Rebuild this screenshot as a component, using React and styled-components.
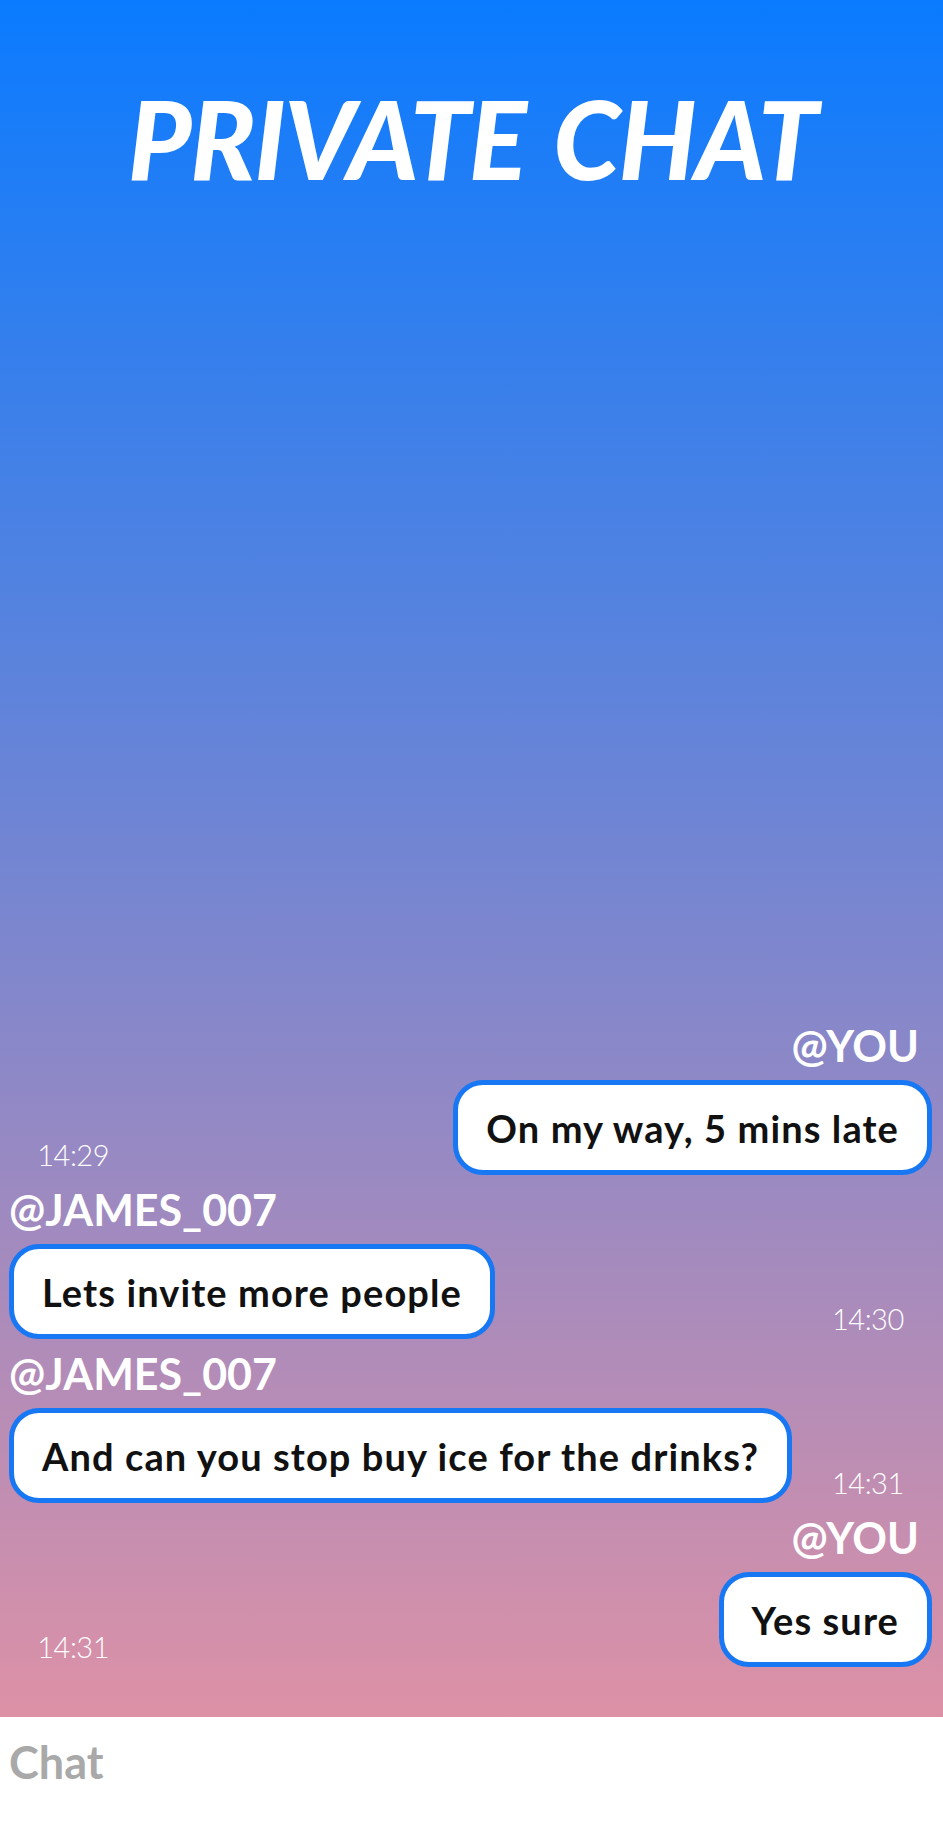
import React from "react";
import styled, { createGlobalStyle } from "styled-components";

const GlobalStyle = createGlobalStyle`
  html, body { margin: 0; padding: 0; }
  body { font-family: Lato, "Noto Sans", sans-serif; background: #fff; }
  * { box-sizing: border-box; }
`;

const Page = styled.div`
  display: flex;
  flex-direction: column;
  min-height: 100vh;
`;

const ChatArea = styled.main`
  flex: 1;
  display: flex;
  flex-direction: column;
  justify-content: space-between;
  background: linear-gradient(180deg, #0a7bff 0%, #8487cb 58%, #dd91a6 100%);
  padding: 84px 11px 50px 9px;
`;

const Title = styled.h1`
  margin: 0;
  text-align: center;
  color: #fff;
  font-family: Lato, sans-serif;
  font-style: italic;
  font-weight: 900;
  font-size: 108px;
  line-height: 1;
  letter-spacing: -1.3px;
  word-spacing: 6px;
  padding-left: 4px;
`;

const Messages = styled.section`
  display: flex;
  flex-direction: column;
  gap: 11px;
`;

const Message = styled.div`
  display: flex;
  flex-direction: column;
  align-items: ${(p) => (p.$mine ? "flex-end" : "flex-start")};
`;

const Name = styled.div`
  color: #fff;
  font-family: Lato, sans-serif;
  font-weight: 700;
  font-size: 43px;
  line-height: 48px;
  margin-bottom: 10px;
  padding-right: ${(p) => (p.$mine ? "13px" : "0")};
`;

const Row = styled.div`
  align-self: stretch;
  display: flex;
  flex-direction: ${(p) => (p.$mine ? "row-reverse" : "row")};
  justify-content: space-between;
  align-items: flex-end;
`;

const Bubble = styled.div`
  height: 95px;
  display: flex;
  align-items: center;
  padding: 0 28px;
  background: #fff;
  border: 5px solid #1877f2;
  border-radius: 30px;
  color: #111;
  font-family: Lato, sans-serif;
  font-weight: 700;
  font-size: 38px;
  letter-spacing: 1.1px;
  white-space: nowrap;
`;

const Time = styled.span`
  width: 100px;
  text-align: ${(p) => (p.$mine ? "right" : "left")};
  color: #fff;
  font-family: Lato, sans-serif;
  font-weight: 300;
  font-size: 29px;
  line-height: 1;
  padding-bottom: 6px;
  letter-spacing: -0.5px;
`;

const InputBar = styled.footer`
  height: 125px;
  background: #fff;
  padding: 18px 9px 0;
`;

const ChatInput = styled.input`
  width: 100%;
  border: none;
  outline: none;
  background: transparent;
  padding: 0;
  font-family: Lato, sans-serif;
  font-weight: 700;
  font-size: 45px;
  color: #333;
  &::placeholder { color: #a9a9a9; }
`;

const messages = [
  { name: "@YOU", text: "On my way, 5 mins late", time: "14:29", mine: true },
  { name: "@JAMES_007", text: "Lets invite more people", time: "14:30", mine: false },
  { name: "@JAMES_007", text: "And can you stop buy ice for the drinks?", time: "14:31", mine: false },
  { name: "@YOU", text: "Yes sure", time: "14:31", mine: true },
];

export default function App() {
  return (
    <Page>
      <GlobalStyle />
      <ChatArea>
        <Title>PRIVATE CHAT</Title>
        <Messages>
          {messages.map((m, i) => (
            <Message key={i} $mine={m.mine}>
              <Name $mine={m.mine}>{m.name}</Name>
              <Row $mine={m.mine}>
                <Bubble>{m.text}</Bubble>
                <Time $mine={m.mine}>{m.time}</Time>
              </Row>
            </Message>
          ))}
        </Messages>
      </ChatArea>
      <InputBar>
        <ChatInput placeholder="Chat" />
      </InputBar>
    </Page>
  );
}
